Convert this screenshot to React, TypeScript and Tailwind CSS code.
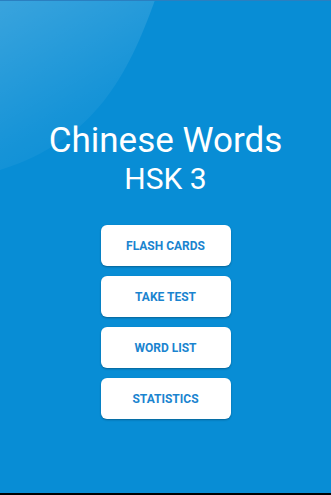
const buttons = ["FLASH CARDS", "TAKE TEST", "WORD LIST", "STATISTICS"]

export default function App() {
  return (
    <div className="relative flex h-[495px] w-[331px] flex-col overflow-hidden bg-[#088dd5] font-['Roboto',sans-serif]">
      {/* glossy highlight */}
      <svg className="absolute left-0 top-0" width="331" height="200" viewBox="0 0 331 200">
        <defs>
          <linearGradient id="gloss" x1="0" y1="0" x2="0.5" y2="1">
            <stop offset="0" stopColor="#ffffff" stopOpacity="0.2" />
            <stop offset="0.7" stopColor="#ffffff" stopOpacity="0.06" />
            <stop offset="1" stopColor="#ffffff" stopOpacity="0.02" />
          </linearGradient>
        </defs>
        <path d="M0 0 L155 0 C128 75 95 140 0 170 Z" fill="url(#gloss)" />
      </svg>
      <div className="relative h-px bg-[#2b7fc0]" />

      <div className="relative mt-[120px] flex flex-col items-center text-white">
        <h1 className="text-[35px] leading-[40px]">Chinese Words</h1>
        <h2 className="text-[30px] leading-[36px]">HSK 3</h2>
      </div>

      <div className="relative mt-[28px] flex flex-col items-center gap-[10px]">
        {buttons.map((label) => (
          <button
            key={label}
            className="h-[41px] w-[130px] rounded-[6px] bg-white text-[12px] font-bold text-[#1a84cf] shadow-[0_1px_2px_rgba(0,0,0,0.3)]"
          >
            {label}
          </button>
        ))}
      </div>

      <div className="absolute bottom-0 left-0 h-[2px] w-full bg-black" />
    </div>
  )
}
